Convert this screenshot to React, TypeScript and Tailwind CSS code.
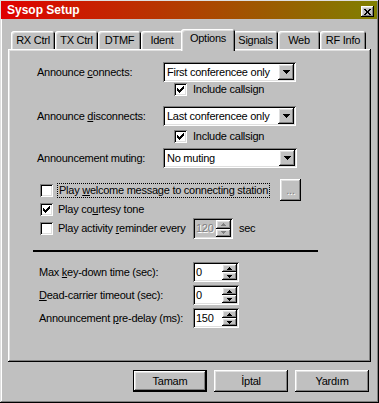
import React from "react";

const raised =
  "shadow-[inset_-1px_-1px_#000,inset_1px_1px_#fff,inset_-2px_-2px_#808080,inset_2px_2px_#dfdfdf]";
const sunken =
  "shadow-[inset_1px_1px_#808080,inset_-1px_-1px_#fff,inset_2px_2px_#000,inset_-2px_-2px_#dfdfdf]";

const CheckMark = () => (
  <svg width="7" height="7" viewBox="0 0 7 7" shapeRendering="crispEdges">
    <rect x="0" y="2" width="1" height="3" fill="#000" />
    <rect x="1" y="3" width="1" height="3" fill="#000" />
    <rect x="2" y="4" width="1" height="3" fill="#000" />
    <rect x="3" y="3" width="1" height="3" fill="#000" />
    <rect x="4" y="2" width="1" height="3" fill="#000" />
    <rect x="5" y="1" width="1" height="3" fill="#000" />
    <rect x="6" y="0" width="1" height="3" fill="#000" />
  </svg>
);

const CheckBox: React.FC<{ checked?: boolean }> = ({ checked }) => (
  <div className={`w-[13px] h-[13px] bg-white flex items-center justify-center shrink-0 ${sunken}`}>
    {checked && <CheckMark />}
  </div>
);

const DownArrow: React.FC<{ color?: string }> = ({ color = "#000" }) => (
  <svg width="7" height="4" viewBox="0 0 7 4" shapeRendering="crispEdges">
    <path d="M0 0h7v1H0zM1 1h5v1H1zM2 2h3v1H2zM3 3h1v1H3z" fill={color} />
  </svg>
);

const SmallArrow: React.FC<{ up?: boolean; color?: string }> = ({ up, color = "#000" }) => (
  <svg width="5" height="3" viewBox="0 0 5 3" shapeRendering="crispEdges">
    {up ? (
      <path d="M2 0h1v1H2zM1 1h3v1H1zM0 2h5v1H0z" fill={color} />
    ) : (
      <path d="M0 0h5v1H0zM1 1h3v1H1zM2 2h1v1H2z" fill={color} />
    )}
  </svg>
);

const Select: React.FC<{ value: string; className: string }> = ({ value, className }) => (
  <div className={`h-[20px] bg-white flex items-center p-[2px] ${sunken} ${className}`}>
    <span className="flex-1 pl-[2px] leading-none whitespace-nowrap overflow-hidden">{value}</span>
    <div className={`w-[16px] h-[16px] shrink-0 bg-[#c0c0c0] flex items-center justify-center ${raised}`}>
      <DownArrow />
    </div>
  </div>
);

const Spin: React.FC<{ value: string; className: string; disabled?: boolean }> = ({
  value,
  className,
  disabled,
}) => (
  <div
    className={`h-[20px] flex items-stretch p-[2px] ${sunken} ${className} ${
      disabled ? "bg-[#c0c0c0]" : "bg-white"
    }`}
  >
    <span
      className={`flex-1 pl-[1px] flex items-center leading-none ${
        disabled ? "text-[#808080] [text-shadow:1px_1px_#fff]" : "text-black"
      }`}
    >
      {value}
    </span>
    <div className="w-[15px] flex flex-col">
      <div className={`flex-1 bg-[#c0c0c0] flex items-center justify-center ${raised}`}>
        <SmallArrow up color={disabled ? "#808080" : "#000"} />
      </div>
      <div className={`flex-1 bg-[#c0c0c0] flex items-center justify-center ${raised}`}>
        <SmallArrow color={disabled ? "#808080" : "#000"} />
      </div>
    </div>
  </div>
);

const tabs = [
  { label: "RX Ctrl", w: "w-[44px]" },
  { label: "TX Ctrl", w: "w-[43px]" },
  { label: "DTMF", w: "w-[43px]" },
  { label: "Ident", w: "w-[42px]" },
  { label: "Options", w: "w-[54px]", active: true },
  { label: "Signals", w: "w-[45px]" },
  { label: "Web", w: "w-[42px]" },
  { label: "RF Info", w: "w-[46px]" },
];

const tabShadow =
  "shadow-[inset_1px_1px_#fff,inset_-1px_0_#000,inset_2px_2px_#dfdfdf,inset_-2px_0_#808080]";

export default function App() {
  return (
    <div
      className={`w-[379px] h-[403px] bg-[#c0c0c0] flex flex-col pl-[1px] pr-[2px] pt-[1px] pb-[2px] text-[11px] tracking-[-0.25px] text-black font-['Liberation_Sans',Arial,sans-serif] shadow-[inset_-1px_-1px_#000,inset_1px_1px_#dfdfdf,inset_-2px_-2px_#808080,inset_2px_2px_#fff]`}
    >
      {/* title bar */}
      <div className="h-[18px] flex justify-between bg-[linear-gradient(to_right,#e00000,#808000)]">
        <span className="pl-[6px] pt-[2px] text-white font-bold text-[12px] leading-[14px] tracking-normal">
          Sysop Setup
        </span>
        <div
          className={`mt-[5px] mr-[3px] w-[13px] h-[11px] bg-[#c0c0c0] flex items-center justify-center ${raised}`}
        >
          <svg width="7" height="6" viewBox="0 0 7 6" shapeRendering="crispEdges">
            <path
              d="M0 0h2v1H0zM5 0h2v1H5zM1 1h2v1H1zM4 1h2v1H4zM2 2h3v2H2zM1 4h2v1H1zM4 4h2v1H4zM0 5h2v1H0zM5 5h2v1H5z"
              fill="#000"
            />
          </svg>
        </div>
      </div>

      {/* tabs */}
      <div className="mt-[10px] ml-[10px] h-[20px] flex items-end">
        {tabs.map((t) =>
          t.active ? (
            <div
              key={t.label}
              className={`relative z-10 -mx-[2px] -mb-[2px] h-[22px] pb-[3px] rounded-t-[3px] bg-[#c0c0c0] flex items-center justify-center ${t.w} ${tabShadow}`}
            >
              {t.label}
            </div>
          ) : (
            <div
              key={t.label}
              className={`h-[18px] rounded-t-[3px] bg-[#c0c0c0] flex items-center justify-center ${t.w} ${tabShadow}`}
            >
              {t.label}
            </div>
          )
        )}
      </div>

      {/* panel */}
      <div className={`ml-[7px] w-[363px] h-[313px] flex flex-col pl-[29px] pt-[13px] ${raised}`}>
        <div className="flex items-center h-[20px]">
          <span className="w-[126px]">
            Announce <u>c</u>onnects:
          </span>
          <Select value="First conferencee only" className="w-[133px]" />
        </div>
        <div className="mt-[1px] ml-[137px] h-[13px] flex items-center gap-[6px]">
          <CheckBox checked />
          <span>Include callsign</span>
        </div>

        <div className="mt-[10px] flex items-center h-[20px]">
          <span className="w-[126px]">
            Announce <u>d</u>isconnects:
          </span>
          <Select value="Last conferencee only" className="w-[133px]" />
        </div>
        <div className="mt-[4px] ml-[137px] h-[13px] flex items-center gap-[6px]">
          <CheckBox checked />
          <span>Include callsign</span>
        </div>

        <div className="mt-[5px] flex items-center h-[20px]">
          <span className="w-[126px]">Announcement muting:</span>
          <Select value="No muting" className="w-[134px]" />
        </div>

        <div className="mt-[11px] h-[22px] flex items-center">
          <div className="ml-[3px]">
            <CheckBox />
          </div>
          <span className="ml-[4px] px-[1px] border border-dotted border-black leading-[13px]">
            Play <u>w</u>elcome message to connecting station
          </span>
          <div
            className={`ml-[10px] w-[21px] h-[22px] bg-[#c0c0c0] flex items-center justify-center text-[#808080] [text-shadow:1px_1px_#fff] ${raised}`}
          >
            ...
          </div>
        </div>

        <div className="mt-[2px] h-[13px] flex items-center">
          <div className="ml-[3px]">
            <CheckBox checked />
          </div>
          <span className="ml-[5px]">
            Play co<u>u</u>rtesy tone
          </span>
        </div>

        <div className="mt-[2px] h-[21px] flex items-center">
          <div className="ml-[3px]">
            <CheckBox />
          </div>
          <span className="ml-[5px] w-[135px]">
            Play activity <u>r</u>eminder every
          </span>
          <Spin value="120" className="w-[40px] h-[21px]" disabled />
          <span className="ml-[6px]">sec</span>
        </div>

        <div className="mt-[11px] -ml-[4px] w-[285px] h-[2px] bg-black" />

        <div className="mt-[10px] flex items-center h-[20px]">
          <span className="ml-[2px] w-[154px]">
            Max <u>k</u>ey-down time (sec):
          </span>
          <Spin value="0" className="w-[46px]" />
        </div>
        <div className="mt-[3px] flex items-center h-[20px]">
          <span className="ml-[2px] w-[154px]">
            <u>D</u>ead-carrier timeout (sec):
          </span>
          <Spin value="0" className="w-[46px]" />
        </div>
        <div className="mt-[3px] flex items-center h-[20px]">
          <span className="ml-[2px] w-[154px]">
            Announcement <u>p</u>re-delay (ms):
          </span>
          <Spin value="150" className="w-[46px]" />
        </div>
      </div>

      {/* buttons */}
      <div className="mt-[8px] pr-[8px] flex justify-end gap-[7px]">
        <button
          className={`w-[74px] h-[22px] bg-[#c0c0c0] border border-black flex items-center justify-center ${raised}`}
        >
          Tamam
        </button>
        <button className={`w-[74px] h-[22px] bg-[#c0c0c0] flex items-center justify-center ${raised}`}>
          İptal
        </button>
        <button className={`w-[74px] h-[22px] bg-[#c0c0c0] flex items-center justify-center ${raised}`}>
          Yardım
        </button>
      </div>
    </div>
  );
}
